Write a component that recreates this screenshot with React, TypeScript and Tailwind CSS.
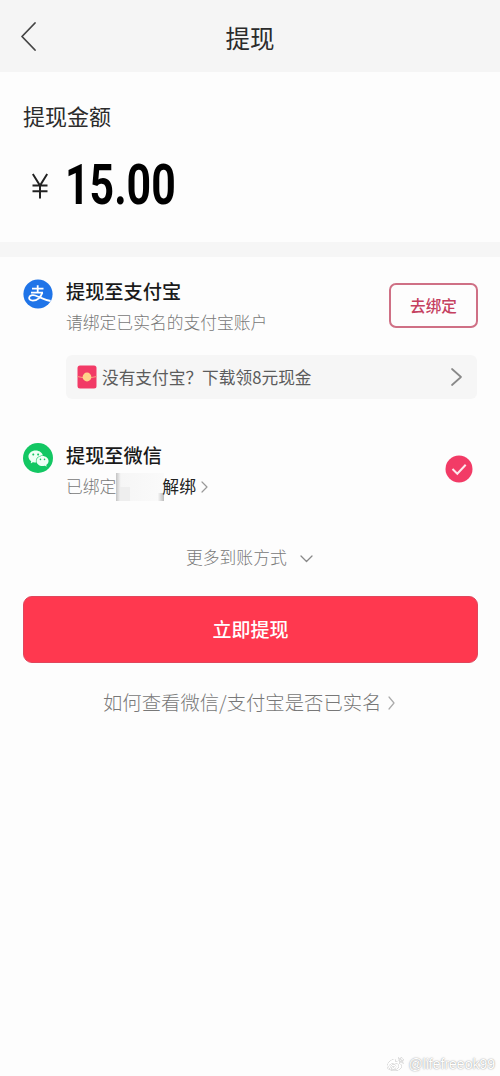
import { ReactNode } from "react";
import { AiFillWechat } from "react-icons/ai";
import { FaWeibo } from "react-icons/fa";
import clsx from "clsx";

function Chevron({ points, className, strokeWidth = 1.5 }: { points: string; className: string; strokeWidth?: number }) {
  return (
    <svg className={clsx("shrink-0 overflow-visible", className)} fill="none" stroke="currentColor" strokeWidth={strokeWidth}>
      <polyline points={points} strokeLinecap="round" strokeLinejoin="round" />
    </svg>
  );
}

function AlipayLogo() {
  return (
    <svg className="size-[30px]" viewBox="0 0 30 30" fill="none">
      <circle cx="15" cy="15" r="14.6" fill="#1f74e8" />
      <g stroke="#fff" strokeWidth="1.8">
        <path d="M9 9.6 H20.5 M14.7 6.2 V13.4 M8 13.6 H20" />
        <path d="M19.4 13.6 C17.8 18 14.2 21.6 9.8 21.6 C7.2 21.6 5.8 20.2 6.2 18.4 C6.7 16.4 9.4 15.6 12.2 16.5 C16.5 17.9 20.5 20.6 27.6 22" />
      </g>
    </svg>
  );
}

function RedPacket() {
  return (
    <svg className="h-6 w-5 shrink-0" viewBox="0 0 20 24">
      <rect x="0.5" y="0.5" width="19" height="23" rx="2.5" fill="#f23a66" />
      <path d="M0.5 11.5 Q10 14 19.5 11.5" fill="none" stroke="#f79a7c" strokeWidth="1.2" />
      <circle cx="10" cy="12" r="4.4" fill="#ffd08a" />
    </svg>
  );
}

function MethodRow({ icon, title, detail, action, className }: { icon: ReactNode; title: string; detail: ReactNode; action: ReactNode; className?: string }) {
  return (
    <div className={clsx("flex pl-[23px]", className)}>
      <div className="mt-[3px] w-[43px] shrink-0">{icon}</div>
      <div className="min-w-0 flex-1">
        <h2 className="text-[19.2px] leading-[30px] font-medium text-[#1a1a1a]">{title}</h2>
        <div className="mt-[1px] flex h-8 items-center text-[16.8px] font-light text-[#787878]">{detail}</div>
      </div>
      {action}
    </div>
  );
}

export default function App() {
  return (
    <div className="flex h-[1076px] w-[500px] flex-col overflow-hidden bg-[#fdfdfd] font-['Noto_Sans_CJK_SC',sans-serif] whitespace-nowrap">
      <header className="grid h-[72px] shrink-0 grid-cols-[1fr_auto_1fr] items-center bg-[#f5f5f5] pt-1">
        <Chevron points="14,1 1,14.5 14,28" className="mt-[-3px] ml-[21px] h-[29px] w-[15px] text-[#444]" strokeWidth={1.8} />
        <h1 className="text-[24.5px] leading-9 text-[#2b2b2b]">提现</h1>
      </header>

      <section className="h-[170px] shrink-0 pt-[27px] pl-[23px]">
        <p className="text-[22px] leading-8 text-[#2b2b2b]">提现金额</p>
        <div className="mt-[26px] flex h-[56px] items-center">
          <svg className="mt-[2px] ml-[9px] h-[26px] w-4 text-[#222]" viewBox="0 0 16 26" fill="none" stroke="currentColor" strokeWidth="2">
            <path d="M0.8 1 L8 12.5 L15.2 1 M8 12.5 V25.5 M0.5 12.5 H15.5 M0.5 18.3 H15.5" />
          </svg>
          <span className="ml-[17px] origin-left scale-x-[0.765] font-['Roboto'] text-[56px] leading-[56px] font-bold text-black">15.00</span>
        </div>
      </section>

      <div className="h-[15px] shrink-0 bg-[#f6f6f6]" />

      <main>
        <MethodRow
          className="pt-[19px]"
          icon={<AlipayLogo />}
          title="提现至支付宝"
          detail="请绑定已实名的支付宝账户"
          action={
            <button className="mt-[7px] mr-[22px] h-[45px] w-[89px] rounded-[7px] border-2 border-[#cf7085] text-[15.6px] font-medium text-[#c5405f]">
              去绑定
            </button>
          }
        />

        <div className="mt-[16px] mr-[23px] ml-[66px] flex h-[44px] items-center rounded-md bg-[#f6f6f6] pr-[15px] pl-[11px]">
          <RedPacket />
          <span className="mt-[2px] ml-[5px] text-[16.7px] text-[#5c5c5c]">没有支付宝？下载领8元现金</span>
          <Chevron points="1,1 10,9 1,17" className="ml-auto h-[18px] w-[11px] text-[#888]" strokeWidth={1.7} />
        </div>

        <MethodRow
          className="mt-[41px]"
          icon={
            <div className="flex size-[30px] items-center justify-center rounded-full bg-[#13c763]">
              <AiFillWechat className="size-[23px] text-[#effff5]" />
            </div>
          }
          title="提现至微信"
          detail={
            <>
              <span>已绑定</span>
              <span className="mr-[-2px] flex h-7 w-[48px] items-end bg-gradient-to-r from-[#c4c4c4] via-[#f6f6f6] via-10% to-[#fafafa]">
                <span className="ml-1 h-[14px] w-[10px] bg-[#eeeeee]" />
                <span className="ml-auto h-2 w-1.5 bg-gradient-to-l from-[#bbb] to-[#f6f6f6]" />
              </span>
              <span className="font-normal text-[#222]">解绑</span>
              <Chevron points="1,1 6,6 1,11" className="ml-[5px] h-3 w-[7px] text-[#999]" strokeWidth={1.2} />
            </>
          }
          action={
            <svg className="mt-[15px] mr-[27px] size-7" viewBox="0 0 28 28" fill="none">
              <circle cx="14" cy="14" r="13.5" fill="#f23b66" />
              <path d="M7.5 14 L12.3 18.8 L20.7 9.8" stroke="#fde8ed" strokeWidth="2" />
            </svg>
          }
        />

        <div className="mt-[39px] flex h-8 items-center pl-[186px] text-[16.8px] font-light text-[#787878]">
          更多到账方式
          <Chevron points="1,1 6.5,6.5 12,1" className="ml-[13px] h-[7px] w-[13px] text-[#888]" strokeWidth={1.3} />
        </div>

        <button className="mt-[22px] ml-[23px] block h-[67px] w-[455px] rounded-[9px] border border-[#e0465c] bg-[#ff384f] text-[19px] font-medium text-white">
          立即提现
        </button>

        <div className="mt-[22px] flex h-9 items-center pl-[103px] text-[19.35px] font-light text-[#787878]">
          如何查看微信/支付宝是否已实名
          <Chevron points="1,1 6,7 1,13" className="ml-[7px] h-[14px] w-[7px] text-[#aaa]" strokeWidth={1.2} />
        </div>
      </main>

      <footer className="mt-auto flex h-6 shrink-0 items-center justify-end pr-[5px] font-['Liberation_Sans'] text-[14px] text-white [text-shadow:0_0_1.5px_#777]">
        <FaWeibo className="mr-1 size-[17px] text-white [filter:drop-shadow(0_0_0.7px_#777)]" />
        @lifefreeok99
      </footer>
    </div>
  );
}
